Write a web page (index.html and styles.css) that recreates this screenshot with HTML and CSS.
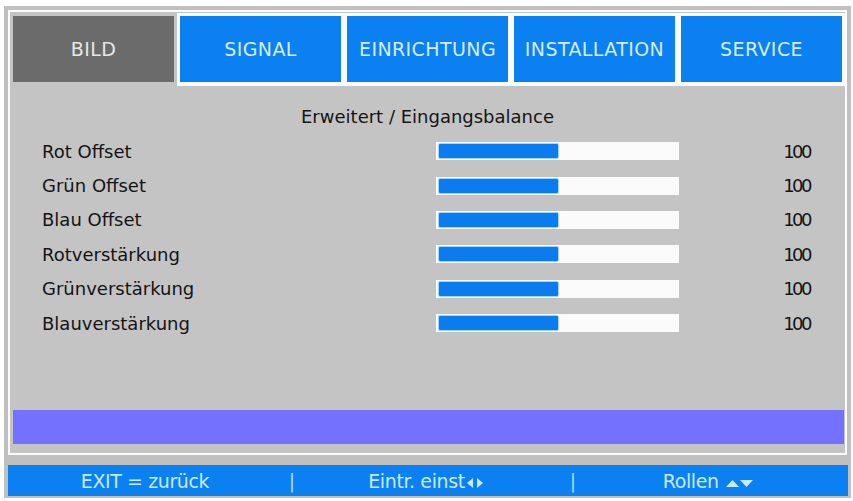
FILE: index.html
```html
<!DOCTYPE html>
<html lang="de">
<head>
    <meta charset="utf-8">
    <title>OSD - Bild</title>
    <link rel="stylesheet" href="styles.css">
</head>
<body>
    <div class="osd">
        <div class="panel">
            <div class="tabs">
                <div class="tab active"><span>BILD</span></div>
                <div class="tab"><span>SIGNAL</span></div>
                <div class="tab"><span>EINRICHTUNG</span></div>
                <div class="tab"><span>INSTALLATION</span></div>
                <div class="tab"><span>SERVICE</span></div>
            </div>

            <div class="content">
                <div class="title">Erweitert / Eingangsbalance</div>

                <div class="row">
                    <span class="label">Rot Offset</span>
                    <div class="bar"><div class="fill" style="width: 50%"></div></div>
                    <span class="value">100</span>
                </div>
                <div class="row">
                    <span class="label">Grün Offset</span>
                    <div class="bar"><div class="fill" style="width: 50%"></div></div>
                    <span class="value">100</span>
                </div>
                <div class="row">
                    <span class="label">Blau Offset</span>
                    <div class="bar"><div class="fill" style="width: 50%"></div></div>
                    <span class="value">100</span>
                </div>
                <div class="row">
                    <span class="label">Rotverstärkung</span>
                    <div class="bar"><div class="fill" style="width: 50%"></div></div>
                    <span class="value">100</span>
                </div>
                <div class="row">
                    <span class="label">Grünverstärkung</span>
                    <div class="bar"><div class="fill" style="width: 50%"></div></div>
                    <span class="value">100</span>
                </div>
                <div class="row">
                    <span class="label">Blauverstärkung</span>
                    <div class="bar"><div class="fill" style="width: 50%"></div></div>
                    <span class="value">100</span>
                </div>

                <div class="hint"></div>
            </div>
        </div>

        <div class="footer">
            <span class="key">EXIT = zurück</span>
            <span class="sep">|</span>
            <span class="key shift">Eintr. einst<svg class="arrows" width="16" height="10" viewBox="0 0 16 10">
                    <polygon points="6,0 6,10 0,5" />
                    <polygon points="10,0 10,10 16,5" />
                </svg></span>
            <span class="sep">|</span>
            <span class="key shift">Rollen
                <svg class="arrows" width="28" height="10" viewBox="0 0 28 10">
                    <polygon points="0,9 13,9 6.5,2" />
                    <polygon points="14,2 27,2 20.5,9" />
                </svg>
            </span>
        </div>
    </div>
</body>
</html>
```

FILE: styles.css
```css
* {
    margin: 0;
    padding: 0;
    box-sizing: border-box;
}

body {
    background: #ffffff;
    font-family: "DejaVu Sans", Verdana, sans-serif;
    color: #141414;
}

.osd {
    margin: 6px 2px 3px 4px;
    padding: 4px 4px 2px 4px;
    background: #c0c0c0;
}

.panel {
    border: 2px solid #fbfbfb;
    background: #c4c4c4;
}

/* tab bar */
.tabs {
    display: grid;
    grid-template-columns: repeat(5, 1fr);
    padding: 1px 0 0 0;
}

.tab {
    padding: 3px 3px 4px 3px;
    background: #fbfbfb;
}

.tab span {
    display: flex;
    align-items: center;
    justify-content: center;
    height: 66px;
    background: #0b80f0;
    color: #d6ecff;
    font-size: 19px;
    letter-spacing: 0.4px;
}

.tab.active {
    background: transparent;
}

.tab.active span {
    background: #6b6b6b;
    color: #e6e6e6;
}

/* settings list */
.content {
    height: 367px;
    display: flex;
    flex-direction: column;
    padding-top: 14px;
}

.title {
    text-align: center;
    font-size: 18px;
    line-height: 34px;
}

.row {
    display: grid;
    grid-template-columns: 394px 243px 1fr;
    align-items: center;
    height: 34.4px;
    padding: 0 35px 0 32px;
    font-size: 18px;
}

.bar {
    height: 18px;
    padding: 2px 3px;
    background: #fbfbfb;
}

.fill {
    height: 100%;
    background: #0a7cf0;
    border-radius: 1px;
    box-shadow: 0 0 0 1px #9cd6ff;
}

.value {
    text-align: right;
    letter-spacing: -2.5px;
}

.hint {
    margin: auto 1px 9px 3px;
    height: 34px;
    background: #7571ff;
}

/* key help line */
.footer {
    display: grid;
    grid-template-columns: 274px 20px 261px 20px 1fr;
    align-items: center;
    height: 31px;
    margin-top: 10px;
    margin-right: -1px;
    background: #0b80f0;
    color: #c6ebff;
    font-size: 19px;
}

.key {
    text-align: center;
    letter-spacing: -0.4px;
}

.key.shift {
    padding-right: 14px;
}

.sep {
    text-align: center;
    color: #9fe0ff;
}

.arrows {
    fill: #c6ebff;
    margin-left: 2px;
    vertical-align: 0;
}
```
